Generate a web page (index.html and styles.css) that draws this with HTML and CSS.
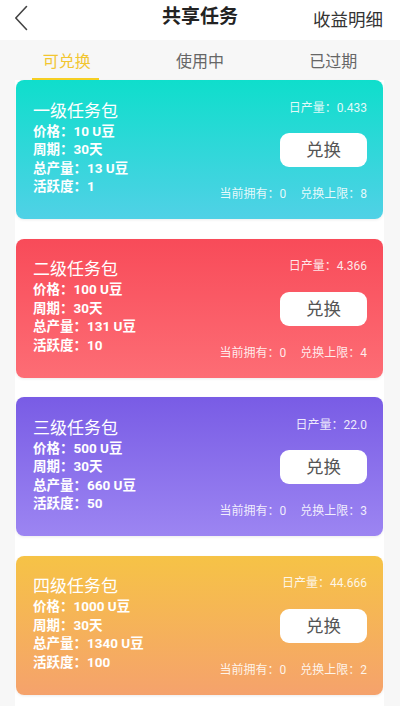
FILE: index.html
```html
<!DOCTYPE html>
<html lang="zh-CN">
<head>
<meta charset="utf-8">
<title>共享任务</title>
<link rel="stylesheet" href="styles.css">
</head>
<body>
<header class="header">
  <span class="back">
    <svg width="14" height="26" viewBox="0 0 14 26"><path d="M12.5 1.5 L1.8 13 L12.5 24.5" fill="none" stroke="#444" stroke-width="1.6" stroke-linecap="round" stroke-linejoin="round"/></svg>
  </span>
  <h1 class="title">共享任务</h1>
  <span class="detail">收益明细</span>
</header>
<nav class="tabs">
  <div class="tab active"><span>可兑换</span></div>
  <div class="tab"><span>使用中</span></div>
  <div class="tab"><span>已过期</span></div>
</nav>
<main class="list">
  <section class="card teal">
    <div class="info">
      <div class="name">一级任务包</div>
      <div class="row">价格：10 U豆</div>
      <div class="row">周期：30天</div>
      <div class="row">总产量：13 U豆</div>
      <div class="row">活跃度：1</div>
    </div>
    <div class="side">
      <div class="daily">日产量：0.433</div>
      <button class="btn">兑换</button>
      <div class="meta"><span>当前拥有：0</span><span>兑换上限：8</span></div>
    </div>
  </section>
  <section class="card red">
    <div class="info">
      <div class="name">二级任务包</div>
      <div class="row">价格：100 U豆</div>
      <div class="row">周期：30天</div>
      <div class="row">总产量：131 U豆</div>
      <div class="row">活跃度：10</div>
    </div>
    <div class="side">
      <div class="daily">日产量：4.366</div>
      <button class="btn">兑换</button>
      <div class="meta"><span>当前拥有：0</span><span>兑换上限：4</span></div>
    </div>
  </section>
  <section class="card purple">
    <div class="info">
      <div class="name">三级任务包</div>
      <div class="row">价格：500 U豆</div>
      <div class="row">周期：30天</div>
      <div class="row">总产量：660 U豆</div>
      <div class="row">活跃度：50</div>
    </div>
    <div class="side">
      <div class="daily">日产量：22.0</div>
      <button class="btn">兑换</button>
      <div class="meta"><span>当前拥有：0</span><span>兑换上限：3</span></div>
    </div>
  </section>
  <section class="card orange">
    <div class="info">
      <div class="name">四级任务包</div>
      <div class="row">价格：1000 U豆</div>
      <div class="row">周期：30天</div>
      <div class="row">总产量：1340 U豆</div>
      <div class="row">活跃度：100</div>
    </div>
    <div class="side">
      <div class="daily">日产量：44.666</div>
      <button class="btn">兑换</button>
      <div class="meta"><span>当前拥有：0</span><span>兑换上限：2</span></div>
    </div>
  </section>
</main>
</body>
</html>
```
FILE: styles.css
```css
* { box-sizing: border-box; }
html, body { margin: 0; padding: 0; }
body {
  background: #f7f7f7;
  font-family: Roboto, "Noto Sans CJK SC", sans-serif;
  color: #333;
  width: 400px;
  overflow: hidden;
}
.header {
  height: 40px;
  background: #fff;
  display: flex;
  align-items: center;
  justify-content: space-between;
  padding: 0 17px 0 14px;
  position: relative;
}
.back { display: flex; width: 14px; height: 26px; margin-top: -4px; }
.title {
  margin: 0;
  font-size: 19px;
  font-weight: 700;
  color: #222;
  position: absolute;
  left: 0; right: 0;
  text-align: center;
  top: 5px;
  line-height: 24px;
  pointer-events: none;
}
.detail { font-size: 17.5px; color: #333; margin-top: -4px; }
.tabs {
  height: 40px;
  display: flex;
  background: #f7f7f7;
}
.tab {
  flex: 1;
  display: flex;
  justify-content: center;
  align-items: center;
  font-size: 16px;
  color: #666;
  position: relative;
}
.tab span { padding-bottom: 1px; }
.tab.active { color: #f2c630; }
.tab.active::after {
  content: "";
  position: absolute;
  bottom: 0;
  left: 32px;
  width: 67px;
  height: 2.5px;
  background: #f5cf23;
}
.list {
  margin: 0 16px 0 15px;
  background: #fff;
  display: flex;
  flex-direction: column;
  gap: 19.5px;
  padding: 0 1px 20px 1px;
}
.card {
  height: 139px;
  border-radius: 8px;
  display: flex;
  justify-content: space-between;
  padding: 0 16px 0 17px;
  color: #fff;
  box-shadow: 0 1px 3px rgba(0,0,0,0.08);
}
.teal { background: linear-gradient(180deg, #0fdecc 0%, #50d1e6 100%); }
.red { background: linear-gradient(180deg, #f84b59 0%, #fd6d75 100%); }
.purple { background: linear-gradient(180deg, #795ce5 0%, #9c85f2 100%); }
.orange { background: linear-gradient(180deg, #f6c346 0%, #f5a26c 100%); }
.info { padding-top: 19.5px; }
.name { font-size: 17px; line-height: 22px; }
.row {
  font-size: 13.5px;
  font-weight: 700;
  line-height: 18.5px;
}
.side {
  display: flex;
  flex-direction: column;
  align-items: flex-end;
  padding-top: 19.5px;
}
.daily {
  font-size: 12px;
  line-height: 16px;
  color: rgba(255,255,255,0.88);
}
.btn {
  margin-top: 17.5px;
  width: 87px;
  height: 34px;
  border: none;
  border-radius: 9px;
  background: #fff;
  color: #555;
  font-family: inherit;
  font-size: 17.5px;
  padding: 0;
  line-height: 34px;
}
.meta {
  margin-top: 19px;
  font-size: 12px;
  line-height: 16px;
  color: rgba(255,255,255,0.88);
  display: flex;
  gap: 14px;
}
```
